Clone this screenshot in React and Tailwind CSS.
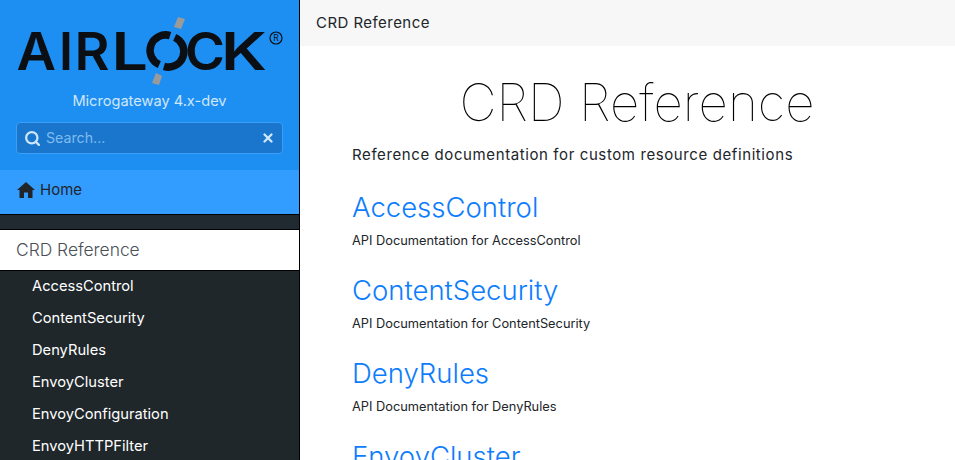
import React from 'react';
import { Search, X } from 'lucide-react';

const navItems = ['AccessControl', 'ContentSecurity', 'DenyRules', 'EnvoyCluster', 'EnvoyConfiguration', 'EnvoyHTTPFilter'];
const sections = ['AccessControl', 'ContentSecurity', 'DenyRules', 'EnvoyCluster'];

function Letter({ x, w, children }) {
  return (
    <text x={x} y="70" fontFamily="Inter, sans-serif" fontWeight="600" fontSize="52" textLength={w} lengthAdjust="spacingAndGlyphs" fill="#0b0f14">{children}</text>
  );
}

function Logo() {
  return (
    <svg width="299" height="90" viewBox="0 0 299 90" className="block">
      <Letter x={16.5} w={39.5}>A</Letter>
      <Letter x={59} w={14}>I</Letter>
      <Letter x={74.5} w={35}>R</Letter>
      <Letter x={111.5} w={36.5}>L</Letter>
      {/* O of the logo, split by the lock bar */}
      <path d="M170.1 35.6 A 15.5 15.5 0 0 0 159.3 64.6" fill="none" stroke="#0b0f14" strokeWidth="7.5" />
      <path d="M163.9 66.4 A 15.5 15.5 0 0 0 174.7 37.4" fill="none" stroke="#0b0f14" strokeWidth="7.5" />
      <polygon points="178,17 185,19 181,29 174,27" fill="#9a9a9a" />
      <polygon points="156,73 162,76 159,85 152,83" fill="#9a9a9a" />
      <Letter x={185} w={40}>C</Letter>
      <Letter x={221} w={46}>K</Letter>
      <circle cx="276" cy="38" r="6" fill="none" stroke="#0b0f14" strokeWidth="1.2" />
      <text x="276" y="41" textAnchor="middle" fontFamily="Inter, sans-serif" fontSize="8.5" fill="#0b0f14">R</text>
    </svg>
  );
}

export default function App() {
  return (
    <div className="flex h-[460px] w-[955px] overflow-hidden bg-white font-['Inter',sans-serif]">
      {/* sidebar */}
      <div className="w-[300px] shrink-0 bg-[#1f272b] border-r border-black">
        <div className="h-[170px] bg-[#1d8ff2]">
          <Logo />
          <div className="mt-[1px] text-center text-[14.6px] leading-[20px] text-[#cfe6fb]">Microgateway 4.x-dev</div>
          <div className="mx-[16px] mt-[11px] flex h-[32px] items-center rounded border border-[#3a9ff5] bg-[#1976cc] pl-[7px] pr-[7px]">
            <Search size={17} strokeWidth={3.2} className="text-[#cfe6fb]" />
            <span className="ml-[5px] flex-1 pb-[1px] text-[14.2px] text-[#7fbcf0]">Search...</span>
            <X size={14} strokeWidth={4} className="text-[#cfe6fb]" />
          </div>
        </div>
        <div className="flex h-[44px] items-center gap-[5px] bg-[#339dff] pb-[4px] pl-[17px] text-[15px] text-[#212529]">
          <svg width="18" height="16" viewBox="0 0 18 16" fill="#212529"><path d="M9 0 L18 8 L15.5 8 L15.5 16 L11 16 L11 10.5 L7 10.5 L7 16 L2.5 16 L2.5 8 L0 8 Z" /></svg>
          <span>Home</span>
        </div>
        <div className="h-[16px] border-y border-black bg-[#212a31]" />
        <div className="flex h-[40px] items-center bg-white pl-[16px] text-[17.4px] font-light text-[#495057]">CRD Reference</div>
        <div className="border-t border-black">
          {navItems.map((item) => (
            <div key={item} className="flex h-[32px] items-center pb-[2px] pl-[32px] text-[14.7px] text-white">{item}</div>
          ))}
        </div>
      </div>

      {/* main */}
      <div className="flex-1">
        <div className="flex h-[46px] items-center bg-[#f7f7f7] px-[16px] text-[15px] tracking-[0.45px] text-[#212529]">CRD Reference</div>
        <div className="pl-[52px] pr-[33px]">
          <h1 className="mt-[24px] text-center text-[51.2px] font-thin leading-[64px] text-black">CRD Reference</h1>
          <p className="mt-[9px] text-[15px] leading-[24px] tracking-[0.6px] text-[#212529]">Reference documentation for custom resource definitions</p>
          <div className="mt-[20px]">
            {sections.map((name) => (
              <div key={name} className="mb-[20px]">
                <h2 className="text-[27.5px] font-light leading-[40px] text-[#0d7dfd]">{name}</h2>
                <p className="mt-[5px] text-[12.8px] leading-[18px] text-[#212529]">API Documentation for {name}</p>
              </div>
            ))}
          </div>
        </div>
      </div>
    </div>
  );
}
